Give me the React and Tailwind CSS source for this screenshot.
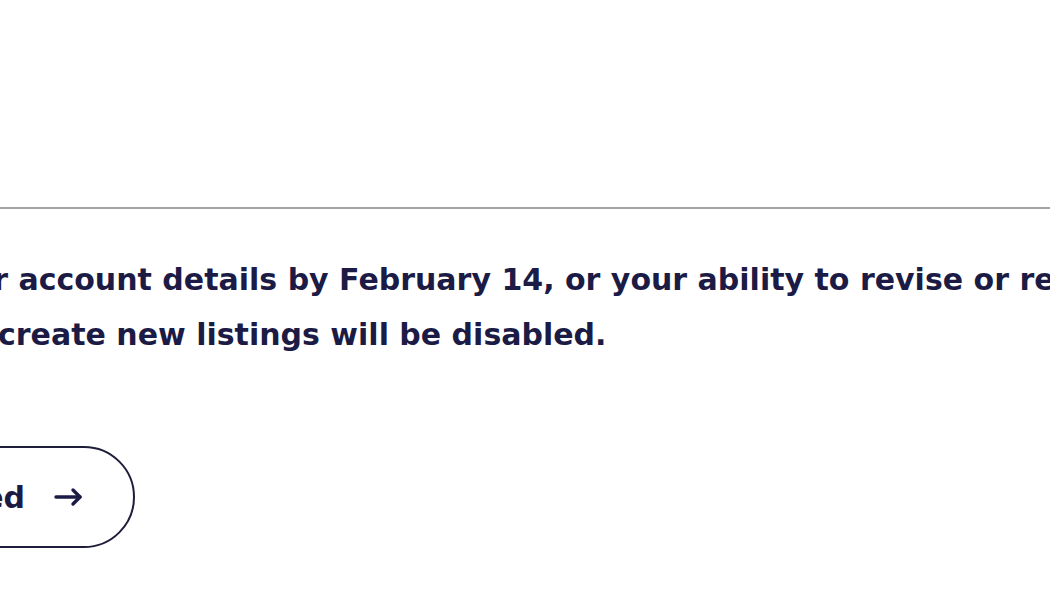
const App = () => {
    return (
        <div className="w-[1050px] h-[600px] overflow-hidden bg-white font-['DejaVu_Sans',Verdana,sans-serif] text-[#1b1b45]">
            {/* empty header area */}
            <div className="h-[207px]" />
            <div className="h-[2px] bg-[#a3a3a3]" />

            {/* notice */}
            <div className="pt-[43px] text-[30px] leading-[55px] font-bold">
                <p className="-ml-[201px] whitespace-nowrap">
                    Update your account details by February 14, or your ability to revise or relist items, or
                </p>
                <p className="-ml-[2px] whitespace-nowrap">create new listings will be disabled.</p>
            </div>

            {/* action */}
            <div className="mt-[84px] flex justify-end w-[135px]">
                <button className="shrink-0 h-[102px] flex items-center gap-[29px] pl-[48px] pr-[50px] rounded-full border-2 border-[#1e1e3a] bg-white text-[30px] font-bold text-[#1b1b45] whitespace-nowrap">
                    Get started
                    <svg width="29" height="20" viewBox="0 0 29 20" fill="none" stroke="currentColor" strokeWidth="3.4" strokeLinecap="round" strokeLinejoin="round">
                        <path d="M2 10h24" />
                        <path d="M19 3l7 7-7 7" />
                    </svg>
                </button>
            </div>
        </div>
    );
};

export default App;
